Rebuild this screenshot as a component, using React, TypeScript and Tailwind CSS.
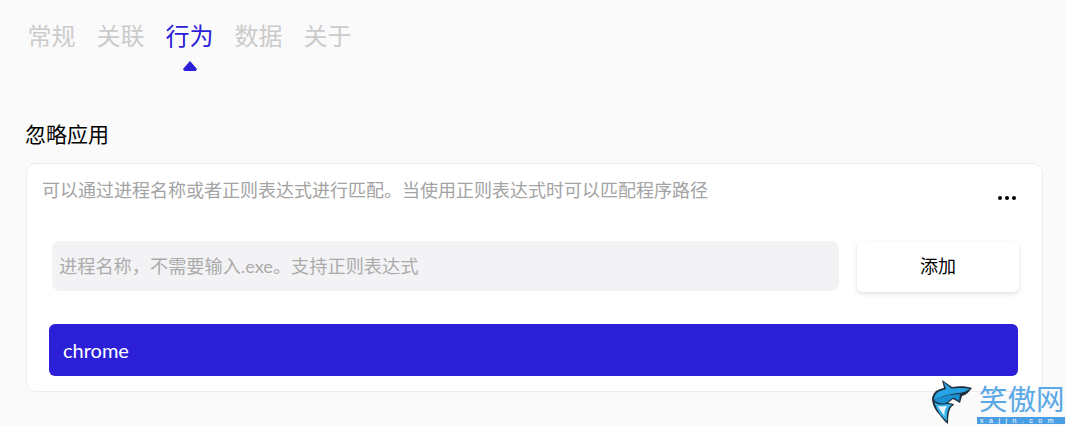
const tabs = ["常规", "关联", "行为", "数据", "关于"];

function Watermark() {
  return (
    <div className="absolute left-[930px] top-[378px] flex items-start">
      <svg width="46" height="47" viewBox="0 0 46 47" className="shrink-0">
        <path
          d="M12 2 L22 9 C29 8 36 8 42 10 C39 14 36 17 32 18 L30 25 L23 21 L18 25 C22 25 24 26 24 27 C20 29 18 33 18 46 C15 44 12 40 9 36 C5 32 2 26 2 20 C3 16 5 13 8 12 C10 11 12 10 14 10 Z"
          fill="#1f2d3a"
        />
        <path
          d="M13.5 4 L21.5 10.5 C28 9.5 35 10 40 11 C37 13 34 14 30 15 C24 15 15 17 4 22 C4 17 7 14 10 13 C12 12 14 12 16 11 Z"
          fill="#27a3e3"
        />
        <path d="M4 22 C12 18 22 16 30 16 L29 23 L23.5 19.5 L16 25 C11 26 7 25 4 22 Z" fill="#1b8fd2" />
        <path
          d="M4.5 24 C8 27 12 27 16 26 C18 26 20 26 22 27 C18 29 16.5 34 17 43 C13 40 10 36 7.5 32 C6 29 5 26 4.5 24 Z"
          fill="#35b2ea"
        />
        <path d="M8 28 C11 29 14 28 17 28 C15 31 14 34 14.5 38 C12 35 9.5 31 8 28 Z" fill="#e8f6fb" />
      </svg>
      <div className="ml-[1px] flex flex-col">
        <div className="mt-[4px] h-[32px] pl-[2px] text-[28.5px] leading-[32px] whitespace-nowrap text-[#5aa8e6] font-['Noto_Sans_CJK_SC',sans-serif]">
          笑傲网
        </div>
        <div className="mt-[3px] h-[7px] w-[88px] overflow-hidden bg-[#4a9fe4] pl-[3px] text-[7px] leading-[7px] tracking-[5.5px] whitespace-nowrap text-white font-['Liberation_Sans',sans-serif]">
          xajjn.com
        </div>
      </div>
    </div>
  );
}

export default function App() {
  return (
    <div className="relative h-[425px] w-[1066px] overflow-hidden bg-[#fafafa] font-['Lato','Noto_Sans_CJK_SC',sans-serif]">
      <div className="flex h-[55px] gap-[21px] pl-[27.5px] pt-[18px]">
        {tabs.map((t) => (
          <div key={t} className="flex w-[48px] flex-col items-center">
            <span className={`text-[24px] leading-[36px] whitespace-nowrap ${t === "行为" ? "text-[#2b20d8]" : "text-[#cbcbcb]"}`}>
              {t}
            </span>
            {t === "行为" && (
              <svg width="16" height="12" viewBox="0 0 16 12" className="mt-[6px] shrink-0">
                <path d="M8 1.5 L14 8.5 Q15 10.5 13 10.5 L3 10.5 Q1 10.5 2 8.5 Z" fill="#2b20d8" stroke="#2b20d8" strokeLinejoin="round" />
              </svg>
            )}
          </div>
        ))}
      </div>

      <div className="mt-[64px] pl-[25px] text-[21px] leading-[30px] text-black">忽略应用</div>

      <div className="ml-[26px] mt-[14px] h-[229px] w-[1017px] rounded-[10px] border border-[#ececec] bg-white pl-[15px]">
        <div className="flex items-start justify-between pr-[26px] pt-[13px]">
          <span className="text-[18px] leading-[27px] text-[#a3a3a3]">
            可以通过进程名称或者正则表达式进行匹配。当使用正则表达式时可以匹配程序路径
          </span>
          <div className="mt-[19px] flex gap-[3px]">
            <span className="h-[4px] w-[4px] rounded-full bg-black" />
            <span className="h-[4px] w-[4px] rounded-full bg-black" />
            <span className="h-[4px] w-[4px] rounded-full bg-black" />
          </div>
        </div>

        <div className="mt-[37px] flex items-start pl-[10px]">
          <input
            readOnly
            placeholder="进程名称，不需要输入.exe。支持正则表达式"
            className="h-[50px] w-[787px] rounded-[8px] bg-[#f3f3f5] px-[7px] text-[18.2px] outline-none placeholder:text-[#ababab]"
          />
          <button className="ml-[18px] h-[51px] w-[162px] rounded-[6px] bg-white text-[18px] text-black shadow-[0_2px_5px_rgba(0,0,0,0.12)]">
            添加
          </button>
        </div>

        <div className="ml-[7px] mt-[32px] flex h-[52px] w-[969px] items-center rounded-[6px] bg-[#2b20d8] pl-[14px] text-[20px] text-white">
          chrome
        </div>
      </div>

      <Watermark />
    </div>
  );
}
